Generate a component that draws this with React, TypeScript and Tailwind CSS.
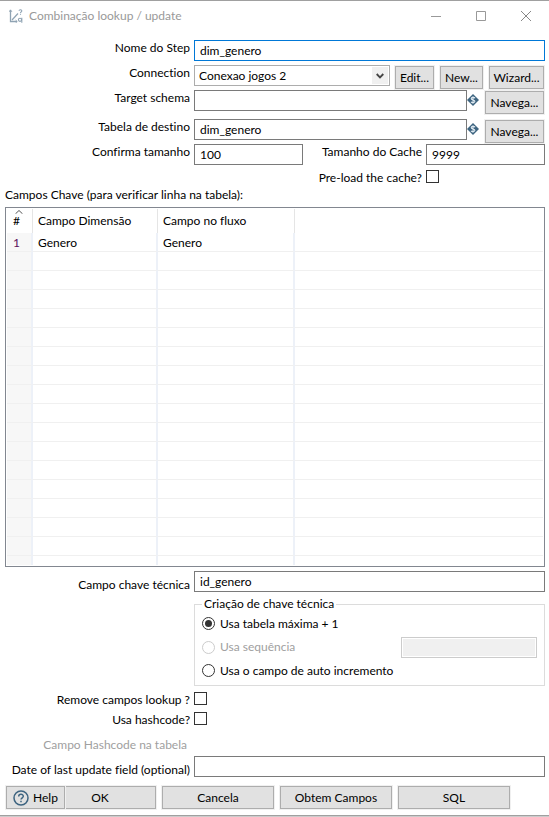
import type { ComponentProps, ReactNode } from "react";

const halo = "shadow-[0_0_0_1px_#f0f0f0]";

function FieldLabel({ htmlFor, className = "", children }: { htmlFor: string; className?: string; children: ReactNode }) {
  return (
    <label htmlFor={htmlFor} className={`w-[185px] shrink-0 text-right whitespace-nowrap ${className}`}>
      {children}
    </label>
  );
}

function TextBox({ className = "border-[#7a7a7a]", ...rest }: ComponentProps<"input">) {
  return (
    <input
      type="text"
      className={`h-[21px] min-w-0 flex-1 border bg-white px-[5px] text-black outline-none ${className}`}
      {...rest}
    />
  );
}

function PushButton({ className = "", children }: { className?: string; children: ReactNode }) {
  return (
    <button
      type="button"
      className={`flex h-[23px] shrink-0 items-center justify-center border border-[#adadad] bg-[#e1e1e1] whitespace-nowrap ${halo} ${className}`}
    >
      {children}
    </button>
  );
}

function CheckBox({ id }: { id: string }) {
  return (
    <input
      type="checkbox"
      id={id}
      className="size-[13px] shrink-0 appearance-none border border-[#333] bg-white checked:bg-[#333]"
    />
  );
}

function Radio({ id, ...rest }: ComponentProps<"input">) {
  return (
    <input
      type="radio"
      id={id}
      name="technical-key"
      className="size-[13px] shrink-0 appearance-none rounded-full border border-[#333] bg-white bg-clip-content p-[2px] checked:bg-[#333] disabled:border-[#ccc]"
      {...rest}
    />
  );
}

function VariableMark() {
  return (
    <svg viewBox="0 0 12 12" className="mt-1 size-3 shrink-0" aria-hidden="true">
      <path d="M6 0 12 6 6 12 0 6Z" fill="#3d6480" />
      <path d="M8 4.3C7.4 3.1 4.2 3 4.2 4.7 4.2 6.3 7.9 5.6 7.9 7.3 7.9 9 4.6 8.9 4 7.7M6 2.2V9.8" fill="none" stroke="#dfe9f0" strokeWidth="1.1" />
    </svg>
  );
}

function TitleBar() {
  return (
    <header className="flex h-[30px] items-center pl-[9px] text-[#999]">
      <svg viewBox="0 0 14 14" className="size-[14px] shrink-0" fill="none" stroke="#8fa3b3" aria-hidden="true">
        <path d="M1.5 1V12.5H8" strokeWidth="1.3" />
        <path d="M3 11 9 4.5" strokeWidth="1.2" />
        <path d="M0 3 1.5 .8 3 3M6.5 11 8.3 12.5 6.5 14" strokeWidth=".8" />
        <path d="M10 1.8C10.2.2 13 .4 12.8 2 12.6 3 11.5 3 11.5 4.2M11.5 5.2V6" strokeWidth="1.1" />
        <circle cx="11" cy="10.8" r="1.6" strokeWidth="1.1" />
        <path d="M12.8 8.8V13.8" strokeWidth="1.1" />
      </svg>
      <h1 className="ml-[6px] flex-1 whitespace-nowrap">Combinação lookup / update</h1>
      <div className="flex items-center">
        <button type="button" aria-label="Minimizar" className="flex w-[46px] justify-center">
          <svg viewBox="0 0 10 10" className="size-[10px]" stroke="#999"><path d="M0 5.5H10" /></svg>
        </button>
        <button type="button" aria-label="Maximizar" className="flex w-11 justify-center">
          <svg viewBox="0 0 10 10" className="size-[10px]" fill="none" stroke="#999"><path d="M.5 .5H9.5V9.5H.5Z" /></svg>
        </button>
        <button type="button" aria-label="Fechar" className="flex w-[46px] justify-center">
          <svg viewBox="0 0 10 10" className="size-[10px]" stroke="#888"><path d="M0 0 10 10M10 0 0 10" /></svg>
        </button>
      </div>
    </header>
  );
}

const cellBorder = "border-r-2 border-r-[#edf1f8]";

function KeyTable() {
  const rows = [["1", "Genero", "Genero"], ...Array.from({ length: 16 }, () => ["", "", ""])];
  return (
    <div className="border border-[#828790] p-px">
      <table aria-labelledby="key-fields" className="w-full table-fixed border-separate border-spacing-0 text-left">
        <colgroup>
          <col className="w-[26px]" />
          <col className="w-[125px]" />
          <col className="w-[137px]" />
          <col />
        </colgroup>
        <thead>
          <tr className="h-6">
            <th className="relative border-r border-[#e5e5e5] p-0 pl-[6px] font-normal">
              <svg viewBox="0 0 8 4" className="absolute top-px left-2 h-1 w-2" fill="none" stroke="#555" aria-hidden="true">
                <path d="M.5 3.8 4 .5 7.5 3.8" />
              </svg>
              #
            </th>
            <th className="border-r border-[#e5e5e5] p-0 pl-[5px] font-normal">Campo Dimensão</th>
            <th className="border-r border-[#e5e5e5] p-0 pl-[5px] font-normal">Campo no fluxo</th>
            <th className="p-0" />
          </tr>
        </thead>
        <tbody>
          {rows.map(([n, dimension, stream], i) => (
            <tr key={i} className="h-[19px]">
              <td className={`border-b border-b-[#f0f0f0] bg-[#f7f7f7] p-0 pt-px pl-[6px] text-[#5c0f5c] ${cellBorder}`}>{n}</td>
              <td className={`border-b border-b-[#f0f0f0] p-0 pt-px pl-[5px] ${cellBorder}`}>{dimension}</td>
              <td className={`border-b border-b-[#f0f0f0] p-0 pt-px pl-[5px] ${cellBorder}`}>{stream}</td>
              <td className="border-b border-b-[#f0f0f0] p-0" />
            </tr>
          ))}
          <tr className="h-[9px]">
            <td className={`bg-[#f7f7f7] p-0 ${cellBorder}`} />
            <td className={`p-0 ${cellBorder}`} />
            <td className={`p-0 ${cellBorder}`} />
            <td className="p-0" />
          </tr>
        </tbody>
      </table>
    </div>
  );
}

export default function App() {
  return (
    <div className="bg-[#ccc] pb-px font-[Lato,'Open_Sans',sans-serif] text-xs leading-4 text-black [font-variant-ligatures:none]">
      <main className="border-y border-[#a0a0a0] bg-white">
        <TitleBar />
        <form className="pt-[9px] pr-1 pb-[6px] pl-[5px]">
          <div className="flex h-[25px] items-start gap-1">
            <FieldLabel htmlFor="step">Nome do Step</FieldLabel>
            <TextBox id="step" defaultValue="dim_genero" className="border-[#0078d7]" />
          </div>

          <div className="flex h-[25px] items-start gap-1">
            <FieldLabel htmlFor="connection">Connection</FieldLabel>
            <div className="relative flex-1">
              <select id="connection" className="h-[21px] w-full appearance-none border border-[#adadad] bg-white pl-1 outline-none">
                <option>Conexao jogos 2</option>
              </select>
              <span className="pointer-events-none absolute top-[2px] right-[2px] flex h-[17px] w-4 items-center justify-center bg-[#f0f0f0]">
                <svg viewBox="0 0 8 6" className="h-[6px] w-2" fill="none" stroke="#444" strokeWidth="1.8" aria-hidden="true">
                  <path d="M.7 1 4 4.4 7.3 1" />
                </svg>
              </span>
            </div>
            <div className="mt-px mr-px ml-px flex gap-[6px]">
              <PushButton className="w-[39px]">Edit...</PushButton>
              <PushButton className="w-[43px]">New...</PushButton>
              <PushButton className="w-[55px]">Wizard...</PushButton>
            </div>
          </div>

          <div className="flex h-[29px] items-start">
            <FieldLabel htmlFor="schema" className="mr-1">Target schema</FieldLabel>
            <TextBox id="schema" />
            <VariableMark />
            <PushButton className="mt-px mr-px ml-[6px] w-[59px]">Navega...</PushButton>
          </div>

          <div className="flex h-[25px] items-start">
            <FieldLabel htmlFor="table" className="mr-1">Tabela de destino</FieldLabel>
            <TextBox id="table" defaultValue="dim_genero" />
            <VariableMark />
            <PushButton className="mt-px mr-px ml-[6px] w-[59px]">Navega...</PushButton>
          </div>

          <div className="flex h-[26px] items-start gap-1">
            <FieldLabel htmlFor="commit">Confirma tamanho</FieldLabel>
            <div className="flex w-[109px]">
              <TextBox id="commit" defaultValue="100" />
            </div>
            <label htmlFor="cache" className="w-[115px] shrink-0 text-right whitespace-nowrap">Tamanho do Cache</label>
            <TextBox id="cache" defaultValue="9999" />
          </div>

          <div className="flex h-[17px] items-start gap-1">
            <label htmlFor="preload" className="w-[417px] text-right">Pre-load the cache?</label>
            <CheckBox id="preload" />
          </div>

          <h2 id="key-fields" className="h-5">Campos Chave (para verificar linha na tabela):</h2>
          <KeyTable />

          <div className="mt-1 flex items-start gap-1">
            <FieldLabel htmlFor="key" className="pt-[6px]">Campo chave técnica</FieldLabel>
            <TextBox id="key" defaultValue="id_genero" />
          </div>

          <fieldset className="mt-[3px] ml-[189px] h-[90px] border border-[#dcdcdc] px-[7px]">
            <legend className="px-[2px]">Criação de chave técnica</legend>
            <div className="flex h-[23px] items-center gap-[5px]">
              <Radio id="max" defaultChecked />
              <label htmlFor="max">Usa tabela máxima + 1</label>
            </div>
            <div className="flex h-6 items-center gap-[5px]">
              <Radio id="sequence" disabled />
              <label htmlFor="sequence" className="flex-1 text-[#a0a0a0]">Usa sequência</label>
              <input
                type="text"
                aria-label="Sequência"
                disabled
                className="h-[21px] w-[136px] border border-[#ccc] bg-[#f0f0f0] shadow-[inset_0_0_0_1px_#fff]"
              />
            </div>
            <div className="flex h-[23px] items-center gap-[5px]">
              <Radio id="auto" />
              <label htmlFor="auto">Usa o campo de auto incremento</label>
            </div>
          </fieldset>

          <div className="mt-[6px] flex h-5 items-start gap-1">
            <FieldLabel htmlFor="remove">Remove campos lookup ?</FieldLabel>
            <CheckBox id="remove" />
          </div>
          <div className="flex h-[25px] items-start gap-1">
            <FieldLabel htmlFor="hashcode">Usa hashcode?</FieldLabel>
            <CheckBox id="hashcode" />
          </div>
          <p className="h-[19px] w-[182px] text-right text-[#a0a0a0]">Campo Hashcode na tabela</p>
          <div className="flex h-[30px] items-start gap-1">
            <FieldLabel htmlFor="updated" className="pt-[6px]">Date of last update field (optional)</FieldLabel>
            <TextBox id="updated" />
          </div>

          <div className="ml-px flex gap-[6px]">
            <div className="flex">
              <PushButton className="relative z-10 w-[59px] gap-1">
                <svg viewBox="0 0 16 16" className="size-4" fill="none" stroke="#3d6480" aria-hidden="true">
                  <circle cx="8" cy="8" r="7" strokeWidth="1.5" />
                  <path d="M5.7 6.4C5.7 3.5 10.3 3.6 10.3 6.2 10.3 7.8 8 7.8 8 9.6M8 10.8V12.3" strokeWidth="1.5" />
                </svg>
                Help
              </PushButton>
              <PushButton className="w-[91px] border-l-0 pr-5">OK</PushButton>
            </div>
            <PushButton className="w-[112px]">Cancela</PushButton>
            <PushButton className="w-[112px]">Obtem Campos</PushButton>
            <PushButton className="w-[112px]">SQL</PushButton>
          </div>
        </form>
      </main>
    </div>
  );
}
